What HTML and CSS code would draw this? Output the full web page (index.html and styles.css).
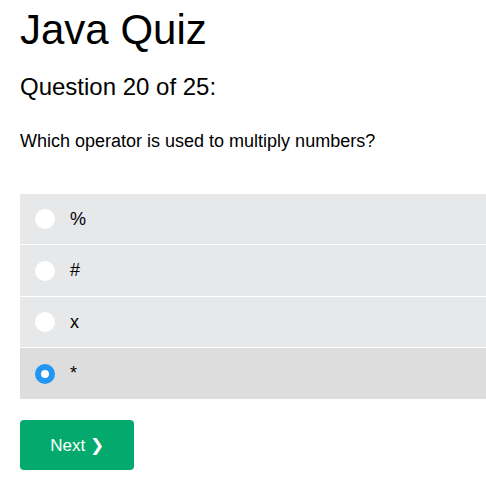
FILE: index.html
```html
<!DOCTYPE html>
<html>
<head>
<meta charset="utf-8">
<link rel="stylesheet" href="styles.css">
</head>
<body>
<div class="quiz">
  <h1 class="title">Java Quiz</h1>
  <h2 class="counter">Question 20 of 25:</h2>
  <p class="question">Which operator is used to multiply numbers?</p>
  <div class="options">
    <label class="option"><span class="radio"></span><span class="opt-text">%</span></label>
    <label class="option"><span class="radio"></span><span class="opt-text">#</span></label>
    <label class="option"><span class="radio"></span><span class="opt-text">x</span></label>
    <label class="option selected"><span class="radio checked"></span><span class="opt-text">*</span></label>
  </div>
  <button class="next">Next ❯</button>
</div>
</body>
</html>
```
FILE: styles.css
```css
html, body {
  margin: 0;
  padding: 0;
  background: #fff;
}
body {
  font-family: "Liberation Sans", Arial, sans-serif;
  color: #000;
  overflow: hidden;
}
.quiz {
  padding: 0 0 0 20px;
}
.title {
  font-size: 42px;
  font-weight: normal;
  margin: 0;
  padding-top: 6px;
  line-height: 48px;
}
.counter {
  font-size: 24px;
  font-weight: normal;
  margin: 19px 0 0;
  line-height: 28px;
}
.question {
  font-size: 18px;
  margin: 30px 0 0;
  line-height: 21px;
}
.options {
  margin-top: 42px;
  display: flex;
  flex-direction: column;
}
.option {
  display: flex;
  align-items: center;
  gap: 15px;
  height: 50px;
  padding-left: 15px;
  background: #e7e8ea;
  border-bottom: 1px solid #fff;
  font-size: 18px;
}
.option:nth-child(even) {
  height: 51px;
}
.option:last-child {
  border-bottom: none;
}
.option.selected {
  background: #dddddd;
}
.radio {
  width: 20px;
  height: 20px;
  border-radius: 50%;
  background: #fff;
  box-sizing: border-box;
  flex: none;
}
.radio.checked {
  background: #fff;
  border: 6px solid #2196f3;
}
.next {
  margin-top: 21px;
  width: 114px;
  height: 50px;
  border: none;
  border-radius: 4px;
  background: #04aa6d;
  color: #fff;
  font-family: "Liberation Sans", Arial, sans-serif;
  font-size: 17px;
  padding: 0;
  cursor: pointer;
}
```
